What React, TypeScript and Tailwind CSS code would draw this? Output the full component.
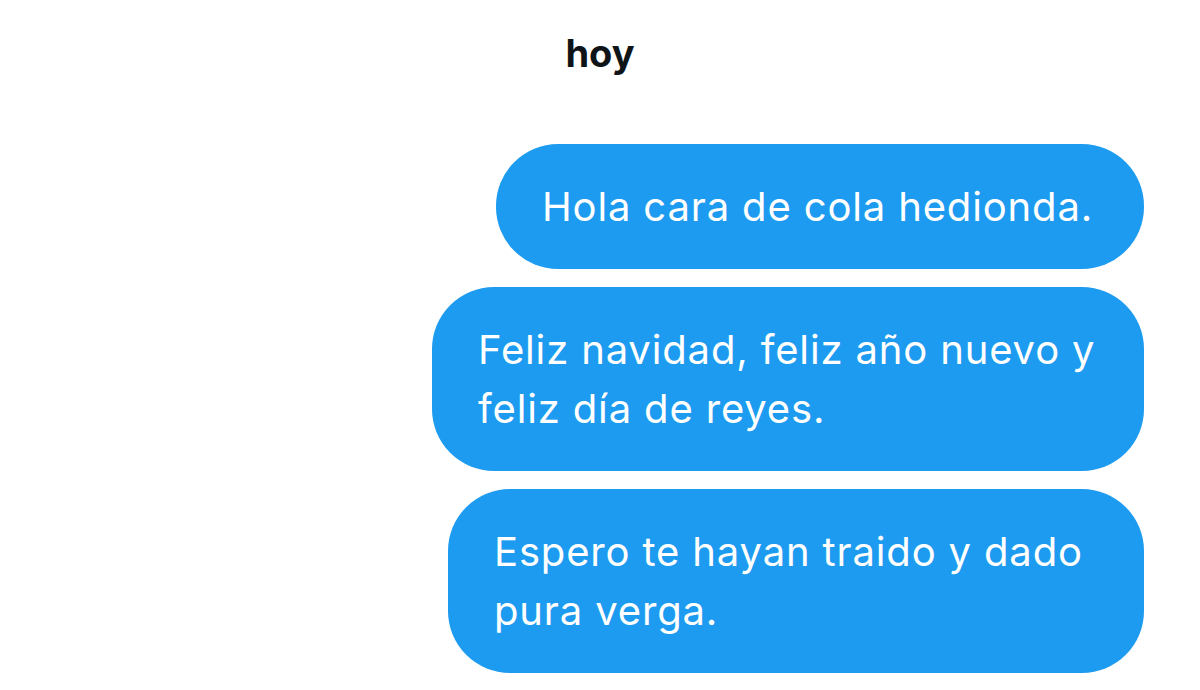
export default function App() {
  const bubble =
    "bg-[#1D9BF0] text-white rounded-[62px] px-[46px] py-[33px] text-[40px] leading-[59px] tracking-[0.85px] whitespace-nowrap";
  return (
    <div className="w-[1200px] h-[690px] bg-white overflow-hidden" style={{ fontFamily: "Inter, Roboto, 'Liberation Sans', sans-serif" }}>
      <div className="pt-[30px] flex justify-center">
        <div className="text-[38px] leading-[46px] font-bold text-[#0f1419]">hoy</div>
      </div>
      <div className="mt-[68px] pr-[56px] flex flex-col items-end gap-[18px]">
        <div className={`${bubble} w-[648px]`}>Hola cara de cola hedionda.</div>
        <div className={`${bubble} w-[712px]`}>
          Feliz navidad, feliz año nuevo y<br />feliz día de reyes.
        </div>
        <div className={`${bubble} w-[696px]`}>
          Espero te hayan traido y dado<br />pura verga.
        </div>
      </div>
    </div>
  );
}
